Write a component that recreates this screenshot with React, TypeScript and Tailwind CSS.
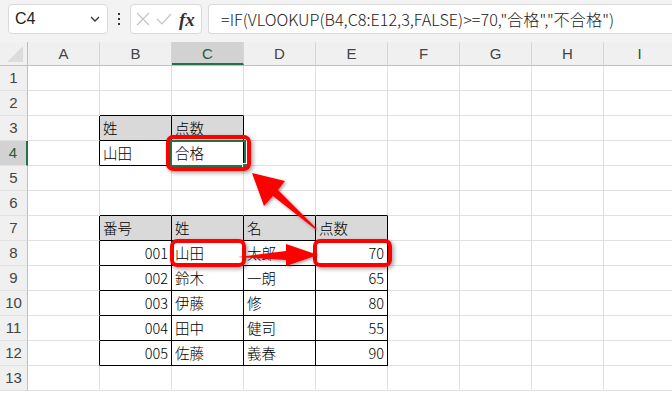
import React from 'react'

const cols = ['A', 'B', 'C', 'D', 'E', 'F', 'G', 'H', 'I']
const rows = [1, 2, 3, 4, 5, 6, 7, 8, 9, 10, 11, 12, 13]

type Cell = { v: string; right?: boolean; fill?: boolean }

// key: row-colIndex
const cells: Record<string, Cell> = {
  '3-1': { v: '姓', fill: true },
  '3-2': { v: '点数', fill: true },
  '4-1': { v: '山田' },
  '4-2': { v: '合格' },
  '7-1': { v: '番号', fill: true },
  '7-2': { v: '姓', fill: true },
  '7-3': { v: '名', fill: true },
  '7-4': { v: '点数', fill: true },
  '8-1': { v: '001', right: true },
  '8-2': { v: '山田' },
  '8-3': { v: '太郎' },
  '8-4': { v: '70', right: true },
  '9-1': { v: '002', right: true },
  '9-2': { v: '鈴木' },
  '9-3': { v: '一朗' },
  '9-4': { v: '65', right: true },
  '10-1': { v: '003', right: true },
  '10-2': { v: '伊藤' },
  '10-3': { v: '修' },
  '10-4': { v: '80', right: true },
  '11-1': { v: '004', right: true },
  '11-2': { v: '田中' },
  '11-3': { v: '健司' },
  '11-4': { v: '55', right: true },
  '12-1': { v: '005', right: true },
  '12-2': { v: '佐藤' },
  '12-3': { v: '義春' },
  '12-4': { v: '90', right: true },
}

const inTable = (r: number, c: number) =>
  (r >= 3 && r <= 4 && c >= 1 && c <= 2) || (r >= 7 && r <= 12 && c >= 1 && c <= 4)

const font = { fontFamily: '"Noto Sans CJK JP", "Noto Sans", sans-serif' }

const GridCell: React.FC<{ r: number; c: number }> = ({ r, c }) => {
  const cell = cells[`${r}-${c}`]
  const blackRight = inTable(r, c) || inTable(r, c + 1)
  const blackBottom = inTable(r, c) || inTable(r + 1, c)
  return (
    <div
      className={`w-[72px] h-[25px] shrink-0 border-r border-b px-[3px] text-[14.5px] font-light leading-[24px] text-black overflow-visible whitespace-nowrap ${
        blackRight ? 'border-r-black' : 'border-r-[#e1e1e1]'
      } ${blackBottom ? 'border-b-black' : 'border-b-[#e1e1e1]'} ${
        cell?.fill ? 'bg-[#d9d9d9]' : 'bg-white'
      } ${cell?.right ? 'text-right' : 'text-left'}`}
    >
      {cell?.v}
    </div>
  )
}

const App: React.FC = () => {
  return (
    <div className="relative w-[672px] h-[395px] overflow-hidden bg-white" style={font}>
      {/* formula bar */}
      <div className="h-[42px] bg-[#f3f3f3] flex items-start pt-[4px] pl-[8px] gap-0">
        <div className="w-[100px] h-[30px] bg-white border border-[#dadada] rounded-[4px] flex items-center justify-between pl-[6px] pr-[6px]">
          <span className="text-[16px] text-[#222]" style={{ fontFamily: '"Liberation Sans", sans-serif' }}>
            C4
          </span>
          <svg width="12" height="8" viewBox="0 0 12 8">
            <path d="M2 2 L6 6 L10 2" fill="none" stroke="#333" strokeWidth="1.3" />
          </svg>
        </div>
        <div className="w-[22px] h-[30px] flex items-center justify-center">
          <svg width="4" height="14" viewBox="0 0 4 14">
            <rect x="1" y="1" width="2" height="2" fill="#333" />
            <rect x="1" y="6" width="2" height="2" fill="#333" />
            <rect x="1" y="11" width="2" height="2" fill="#333" />
          </svg>
        </div>
        <div className="w-[72px] h-[30px] bg-white border border-[#dadada] rounded-[4px] flex items-center pl-[5px] gap-[6px]">
          <svg width="14" height="14" viewBox="0 0 14 14">
            <path d="M1 1 L13 13 M13 1 L1 13" stroke="#c4c4c4" strokeWidth="1.2" />
          </svg>
          <svg width="16" height="12" viewBox="0 0 16 12">
            <path d="M1 6 L6 11 L15 1" fill="none" stroke="#c4c4c4" strokeWidth="1.2" />
          </svg>
          <span
            className="italic font-bold text-[19px] text-[#333] leading-none ml-[1px]"
            style={{ fontFamily: '"Liberation Serif", serif' }}
          >
            fx
          </span>
        </div>
        <div className="ml-[6px] flex-1 h-[30px] bg-white border border-r-0 border-[#dadada] rounded-l-[4px] flex items-center pl-[12px]">
          <span className="text-[16.2px] font-light text-[#222] whitespace-nowrap" style={font}>
            =IF(VLOOKUP(B4,C8:E12,3,FALSE)&gt;=70,"合格","不合格")
          </span>
        </div>
      </div>

      {/* column header */}
      <div className="flex h-[24px] bg-[#f0f0f0] border-b-[1.5px] border-[#c0c0c0]">
        <div className="relative w-[28px] shrink-0 border-r border-[#c0c0c0]">
          <svg className="absolute left-[7px] top-[4px]" width="16" height="16" viewBox="0 0 16 16">
            <polygon points="16,0 16,16 0,16" fill="#dcdcdc" />
          </svg>
        </div>
        {cols.map((c) => (
          <div
            key={c}
            className={`w-[72px] shrink-0 border-r border-[#d6d6d6] text-center text-[15px] leading-[23px] ${
              c === 'C' ? 'bg-[#d2d2d2] border-b-2 border-b-[#217346] text-[#1e5c3a]' : 'text-[#444]'
            }`}
            style={{ fontFamily: '"Liberation Sans", sans-serif' }}
          >
            {c}
          </div>
        ))}
      </div>

      {/* grid rows */}
      {rows.map((r) => (
        <div key={r} className="flex">
          <div
            className={`w-[28px] h-[25px] shrink-0 border-b border-b-[#e1e1e1] text-center text-[15px] leading-[24px] ${
              r === 4
                ? 'bg-[#d2d2d2] border-r-2 border-r-[#217346] text-[#1e5c3a]'
                : 'bg-[#f0f0f0] border-r border-r-[#c0c0c0] text-[#444]'
            }`}
            style={{ fontFamily: '"Liberation Sans", sans-serif' }}
          >
            {r}
          </div>
          {cols.map((_, c) => (
            <GridCell key={c} r={r} c={c} />
          ))}
        </div>
      ))}

      {/* selected cell C4 */}
      <div className="absolute left-[170px] top-[140px] w-[76px] h-[27px] border-2 border-[#217346]" />
      <div className="absolute left-[242px] top-[163px] w-[6px] h-[6px] bg-[#217346] border border-white" />

      {/* red highlight boxes */}
      <div className="absolute left-[166px] top-[135px] w-[85px] h-[36px] border-[4px] border-[#ff0000] rounded-[7px] shadow-[2px_2px_4px_rgba(0,0,0,0.35)]" />
      <div className="absolute left-[170px] top-[239px] w-[76px] h-[28px] border-[4px] border-[#ff0000] rounded-[7px] shadow-[2px_2px_4px_rgba(0,0,0,0.35)]" />
      <div className="absolute left-[313px] top-[239px] w-[79px] h-[28px] border-[4px] border-[#ff0000] rounded-[7px] shadow-[2px_2px_4px_rgba(0,0,0,0.35)]" />

      {/* arrows */}
      <svg className="absolute left-0 top-0" width="672" height="395" viewBox="0 0 672 395">
        <defs>
          <filter id="sh" x="-20%" y="-20%" width="140%" height="140%">
            <feDropShadow dx="1.5" dy="1.5" stdDeviation="1.5" floodColor="#000" floodOpacity="0.35" />
          </filter>
        </defs>
        <polygon
          points="252,173 285,181 278,190 316.5,228.5 315.5,229.5 273,196 264,206"
          fill="#ff0000"
          filter="url(#sh)"
        />
        <polygon
          points="238,257 286,251 286,244 318,255 286,266 286,260"
          fill="#ff0000"
          filter="url(#sh)"
        />
      </svg>
    </div>
  )
}

export default App
